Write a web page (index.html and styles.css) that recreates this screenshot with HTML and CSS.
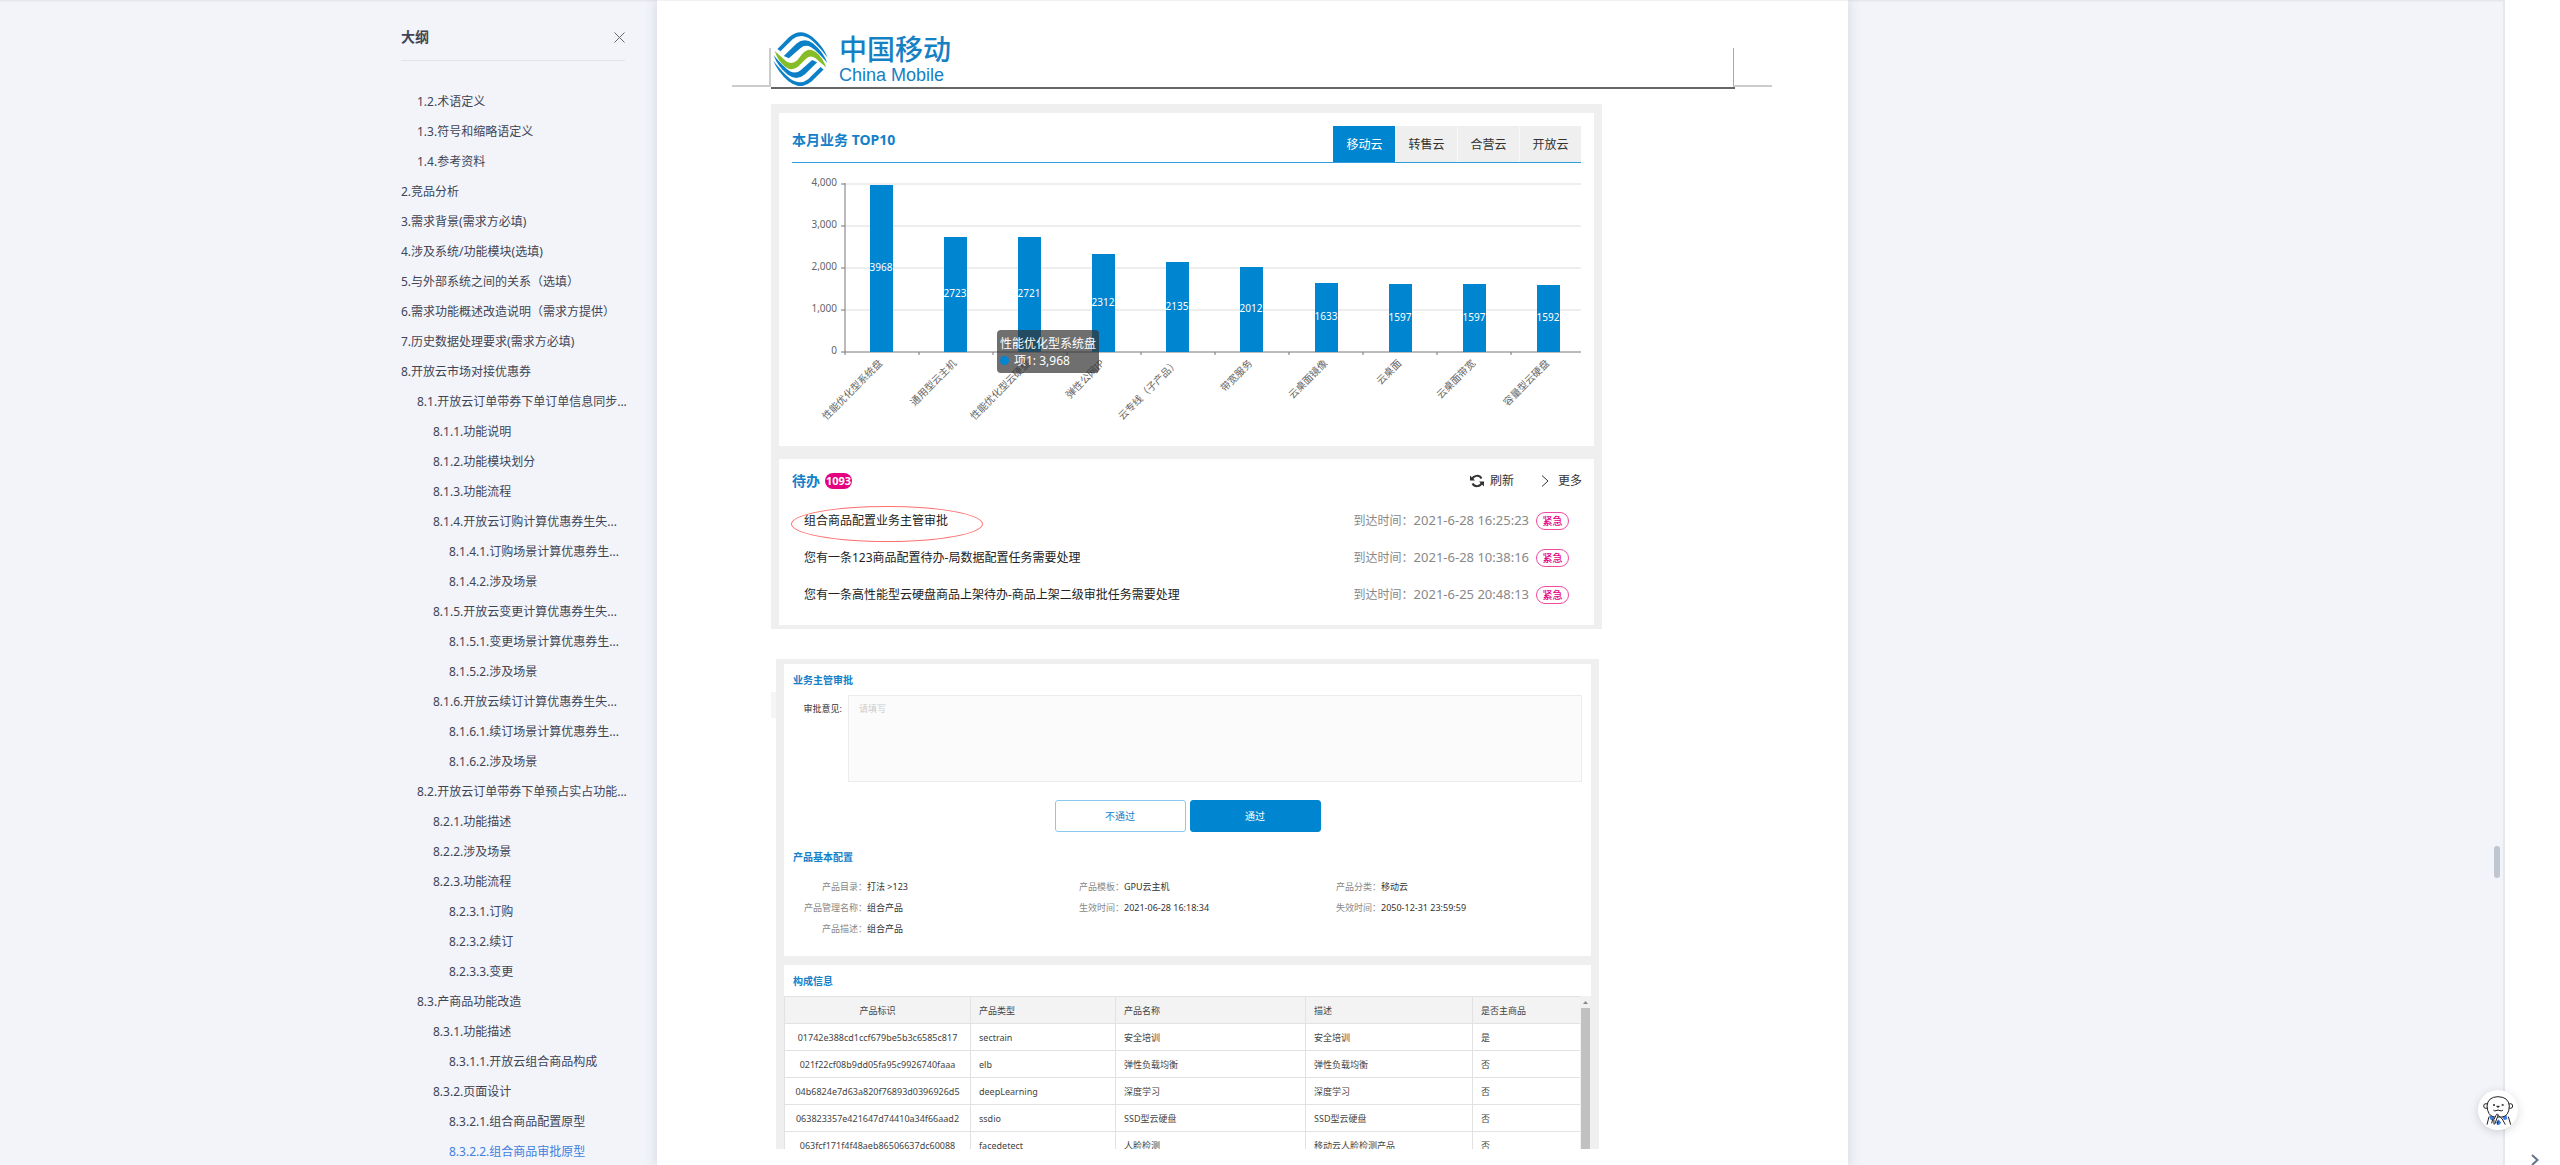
FILE: index.html
```html
<!DOCTYPE html>
<html lang="zh-CN">
<head>
<meta charset="utf-8">
<title>组合商品审批原型</title>
<link rel="stylesheet" href="styles.css">
</head>
<body>
<main class="viewer">
  <nav class="outline" aria-label="大纲">
    <header class="outline-head">
      <h2>大纲</h2>
      <button class="close" type="button" aria-label="关闭"><svg width="11" height="11" viewBox="0 0 11 11"><path d="M.5 .5l10 10M10.500 .5l-10 10"/></svg></button>
    </header>
    <ul class="outline-list">
      <li class="l2"><a href="#">1.2.术语定义</a></li>
      <li class="l2"><a href="#">1.3.符号和缩略语定义</a></li>
      <li class="l2"><a href="#">1.4.参考资料</a></li>
      <li><a href="#">2.竞品分析</a></li>
      <li><a href="#">3.需求背景(需求方必填)</a></li>
      <li><a href="#">4.涉及系统/功能模块(选填)</a></li>
      <li><a href="#">5.与外部系统之间的关系（选填）</a></li>
      <li><a href="#">6.需求功能概述改造说明（需求方提供）</a></li>
      <li><a href="#">7.历史数据处理要求(需求方必填)</a></li>
      <li><a href="#">8.开放云市场对接优惠券</a></li>
      <li class="l2"><a href="#">8.1.开放云订单带券下单订单信息同步...</a></li>
      <li class="l3"><a href="#">8.1.1.功能说明</a></li>
      <li class="l3"><a href="#">8.1.2.功能模块划分</a></li>
      <li class="l3"><a href="#">8.1.3.功能流程</a></li>
      <li class="l3"><a href="#">8.1.4.开放云订购计算优惠券生失...</a></li>
      <li class="l4"><a href="#">8.1.4.1.订购场景计算优惠券生...</a></li>
      <li class="l4"><a href="#">8.1.4.2.涉及场景</a></li>
      <li class="l3"><a href="#">8.1.5.开放云变更计算优惠券生失...</a></li>
      <li class="l4"><a href="#">8.1.5.1.变更场景计算优惠券生...</a></li>
      <li class="l4"><a href="#">8.1.5.2.涉及场景</a></li>
      <li class="l3"><a href="#">8.1.6.开放云续订计算优惠券生失...</a></li>
      <li class="l4"><a href="#">8.1.6.1.续订场景计算优惠券生...</a></li>
      <li class="l4"><a href="#">8.1.6.2.涉及场景</a></li>
      <li class="l2"><a href="#">8.2.开放云订单带券下单预占实占功能...</a></li>
      <li class="l3"><a href="#">8.2.1.功能描述</a></li>
      <li class="l3"><a href="#">8.2.2.涉及场景</a></li>
      <li class="l3"><a href="#">8.2.3.功能流程</a></li>
      <li class="l4"><a href="#">8.2.3.1.订购</a></li>
      <li class="l4"><a href="#">8.2.3.2.续订</a></li>
      <li class="l4"><a href="#">8.2.3.3.变更</a></li>
      <li class="l2"><a href="#">8.3.产商品功能改造</a></li>
      <li class="l3"><a href="#">8.3.1.功能描述</a></li>
      <li class="l4"><a href="#">8.3.1.1.开放云组合商品构成</a></li>
      <li class="l3"><a href="#">8.3.2.页面设计</a></li>
      <li class="l4"><a href="#">8.3.2.1.组合商品配置原型</a></li>
      <li class="l4"><a href="#" class="current">8.3.2.2.组合商品审批原型</a></li>
    </ul>
  </nav>

  <article class="paper">
    <header class="page-head">
      <span class="corner corner-left"></span>
      <div class="brand">
        <svg class="brand-mark" width="55" height="54" viewBox="157 96 163 160" aria-hidden="true">
          <g fill="#0c80c6">
            <path d="M170 146L205 111Q238 82 274 111Q306 139 319 172Q292 137 270 119Q240 98 216 117L179 153Z"/>
            <path d="M189 167L226 131Q250 111 276 130Q307 156 318 188Q288 152 270 141Q252 131 238 144L204 174Z"/>
          </g>
          <g fill="#0c80c6" transform="rotate(180 238.500 176.500)">
            <path d="M170 146L205 111Q238 82 274 111Q306 139 319 172Q292 137 270 119Q240 98 216 117L179 153Z"/>
            <path d="M189 167L226 131Q250 111 276 130Q307 156 318 188Q288 152 270 141Q252 131 238 144L204 174Z"/>
          </g>
          <path fill="#86bc25" d="M162 152L196 183Q213 194 229 180L243 162Q262 138 285 156Q304 172 315 201L283 174Q268 163 255 175L230 200Q211 213 192 198Q171 180 162 152Z"/>
        </svg>
        <p class="brand-name"><span class="brand-cn">中国移动</span><span class="brand-en">China Mobile</span></p>
      </div>
      <span class="corner corner-right"></span>
    </header>

    <section class="shot shot-home">
      <div class="panel panel-chart">
        <header class="chart-head">
          <h3>本月业务 TOP10</h3>
          <div class="tabs">
            <button type="button" class="on">移动云</button>
            <button type="button">转售云</button>
            <button type="button">合营云</button>
            <button type="button">开放云</button>
          </div>
        </header>
        <figure class="chart">
          <svg viewBox="0 0 789 283">
            <g class="grid"><path d="M53 21H789M53 63H789M53 105H789M53 147H789"/></g>
            <g class="axis"><path d="M53 20V192M49 21H53M49 63H53M49 105H53M49 147H53M49 189H789M127 189V192M201 189V192M275 189V192M349 189V192M423 189V192M497 189V192M571 189V192M645 189V192M719 189V192"/></g>
            <g class="tick">
              <text x="45" y="23">4,000</text><text x="45" y="65">3,000</text><text x="45" y="107">2,000</text><text x="45" y="149">1,000</text><text x="45" y="191">0</text>
            </g>
            <g class="bar">
              <rect x="78" y="22" width="23" height="167"/><rect x="152" y="74" width="23" height="115"/><rect x="226" y="74" width="23" height="115"/><rect x="300" y="91" width="23" height="98"/><rect x="374" y="99" width="23" height="90"/><rect x="448" y="104" width="23" height="85"/><rect x="523" y="120" width="23" height="69"/><rect x="597" y="121" width="23" height="68"/><rect x="671" y="121" width="23" height="68"/><rect x="745" y="122" width="23" height="67"/>
            </g>
            <g class="value">
              <text x="89" y="108">3968</text><text x="163" y="134">2723</text><text x="237" y="134">2721</text><text x="311" y="143">2312</text><text x="385" y="147">2135</text><text x="459" y="149">2012</text><text x="534" y="157">1633</text><text x="608" y="158">1597</text><text x="682" y="158">1597</text><text x="756" y="158">1592</text>
            </g>
            <g class="name">
              <text transform="translate(91 201) rotate(-45)">性能优化型系统盘</text>
              <text transform="translate(165 201) rotate(-45)">通用型云主机</text>
              <text transform="translate(239 201) rotate(-45)">性能优化型云硬盘</text>
              <text transform="translate(313 201) rotate(-45)">弹性公网IP</text>
              <text transform="translate(387 201) rotate(-45)">云专线（子产品）</text>
              <text transform="translate(461 201) rotate(-45)">带宽服务</text>
              <text transform="translate(536 201) rotate(-45)">云桌面镜像</text>
              <text transform="translate(610 201) rotate(-45)">云桌面</text>
              <text transform="translate(684 201) rotate(-45)">云桌面带宽</text>
              <text transform="translate(758 201) rotate(-45)">容量型云硬盘</text>
            </g>
          </svg>
          <figcaption class="tooltip">性能优化型系统盘<br><i class="dot"></i>项1: 3,968</figcaption>
        </figure>
      </div>

      <div class="panel panel-todo">
        <header class="todo-head">
          <h3>待办</h3><span class="count">1093</span>
          <button type="button" class="refresh"><svg width="14" height="14" viewBox="0 0 14 14"><path d="M2 5.500A5.200 5.200 0 0 1 11.500 4.500M12 8.500A5.200 5.200 0 0 1 2.500 9.500"/><path class="fill" d="M0 1.500V6.500H5ZM14 12.500V7.500H9Z"/></svg>刷新</button>
          <a href="#" class="more"><svg width="8" height="12" viewBox="0 0 8 12"><path d="M1 .5L7 6L1 11.500"/></svg>更多</a>
        </header>
        <ul class="todo-list">
          <li class="circled"><a href="#">组合商品配置业务主管审批</a><span>到达时间：<time>2021-6-28 16:25:23</time></span><em>紧急</em></li>
          <li><a href="#">您有一条123商品配置待办-局数据配置任务需要处理</a><span>到达时间：<time>2021-6-28 10:38:16</time></span><em>紧急</em></li>
          <li><a href="#">您有一条高性能型云硬盘商品上架待办-商品上架二级审批任务需要处理</a><span>到达时间：<time>2021-6-25 20:48:13</time></span><em>紧急</em></li>
        </ul>
      </div>
    </section>

    <section class="shot shot-approve">
      <div class="panel panel-form">
        <h4>业务主管审批</h4>
        <div class="opinion">
          <label for="opinion">审批意见:</label>
          <textarea id="opinion" placeholder="请填写"></textarea>
        </div>
        <div class="actions">
          <button type="button">不通过</button>
          <button type="button" class="primary">通过</button>
        </div>
        <h4>产品基本配置</h4>
        <dl class="facts">
          <div><dt>产品目录：</dt><dd>打法 &gt;123</dd></div>
          <div><dt>产品模板：</dt><dd>GPU云主机</dd></div>
          <div><dt>产品分类：</dt><dd>移动云</dd></div>
          <div><dt>产品管理名称：</dt><dd>组合产品</dd></div>
          <div><dt>生效时间：</dt><dd>2021-06-28 16:18:34</dd></div>
          <div><dt>失效时间：</dt><dd>2050-12-31 23:59:59</dd></div>
          <div><dt>产品描述：</dt><dd>组合产品</dd></div>
        </dl>
      </div>
      <div class="panel panel-parts">
        <h4>构成信息</h4>
        <div class="table-wrap">
          <table>
            <colgroup><col class="c-id"><col class="c-type"><col class="c-name"><col class="c-desc"><col></colgroup>
            <thead><tr><th>产品标识</th><th>产品类型</th><th>产品名称</th><th>描述</th><th>是否主商品</th></tr></thead>
            <tbody>
              <tr><td>01742e388cd1ccf679be5b3c6585c817</td><td>sectrain</td><td>安全培训</td><td>安全培训</td><td>是</td></tr>
              <tr><td>021f22cf08b9dd05fa95c9926740faaa</td><td>elb</td><td>弹性负载均衡</td><td>弹性负载均衡</td><td>否</td></tr>
              <tr><td>04b6824e7d63a820f76893d0396926d5</td><td>deepLearning</td><td>深度学习</td><td>深度学习</td><td>否</td></tr>
              <tr><td>063823357e421647d74410a34f66aad2</td><td>ssdio</td><td>SSD型云硬盘</td><td>SSD型云硬盘</td><td>否</td></tr>
              <tr><td>063fcf171f4f48aeb86506637dc60088</td><td>facedetect</td><td>人脸检测</td><td>移动云人脸检测产品</td><td>否</td></tr>
            </tbody>
          </table>
          <div class="scrollbar"><svg width="5" height="3" viewBox="0 0 5 3"><path d="M0 3L2.500 0L5 3Z"/></svg><span></span></div>
        </div>
      </div>
    </section>
  </article>
  <span class="page-thumb"></span>
</main>

<aside class="rail">
  <button type="button" class="mascot" aria-label="助手">
    <svg width="40" height="40" viewBox="0 0 120 120" stroke="#222" stroke-width="3">
      <path fill="#3b7de8" stroke="none" d="M34 76L50 80L46 92L36 88ZM72 80L86 76L88 88L78 90ZM54 98L61 88L70 98L62 106Z"/>
      <path d="M33 80L27 104M91 80L98 104M44 88L41 100M60 92L58 104"/>
      <circle cx="24" cy="48" r="7" fill="#fff"/><circle cx="97" cy="48" r="7" fill="#fff"/>
      <path fill="#fff" d="M27 48Q29 21 60 20Q92 21 94 48Q93 79 72 81L48 81Q29 77 27 48Z"/>
      <path d="M46 60Q48 64 54 62Q60 58 66 62Q72 64 75 60"/>
      <path fill="#222" d="M56 49H64L60 52Z"/><path d="M45 45H51M71 45H77" stroke-width="5"/>
      <path fill="#fff" d="M48 103Q44 88 54 76Q59 68 60 74Q60 80 56 87L50 103M82 104Q74 84 61 76"/>
    </svg>
  </button>
  <button type="button" class="expand" aria-label="展开"><svg width="8" height="12" viewBox="0 0 8 12"><path d="M1 1L6.500 6L1 11"/></svg></button>
</aside>
</body>
</html>
```
FILE: styles.css
```css
* { box-sizing: border-box; }
body {
  margin: 0;
  min-height: 100vh;
  display: flex;
  background: #fff;
  color: #333;
  font: 12px/1.5 "Noto Sans", "Noto Sans CJK SC", sans-serif;
}
h2, h3, h4, p, ul, dl, dd, figure { margin: 0; padding: 0; }
ul { list-style: none; }
a { color: inherit; text-decoration: none; }
em, i { font-style: normal; }
button { margin: 0; padding: 0; border: 0; background: none; color: inherit; font: inherit; cursor: pointer; }
svg { display: block; fill: none; }

/* viewer */
.viewer {
  position: relative;
  flex: 1;
  display: grid;
  grid-template-columns: 1fr 1191px 1fr;
  padding-left: 2px;
  margin-bottom: 1px;
  background: #f2f4f9;
  border-right: 2px solid #e5e8ec;
  border-bottom: 1px solid #e2e4ee;
  box-shadow: inset 0 2px 2px -1px rgba(0, 0, 0, .08);
}
.page-thumb {
  position: absolute;
  top: 846px;
  right: 3px;
  width: 6px;
  height: 32px;
  border-radius: 3px;
  background: #c0c6d0;
}

/* outline */
.outline {
  justify-self: end;
  width: 224px;
  margin-right: 32px;
  padding-top: 26px;
  color: #3f4556;
}
.outline-head {
  display: flex;
  justify-content: space-between;
  align-items: center;
  padding-bottom: 12px;
  margin-bottom: 26px;
  border-bottom: 1px solid #e1e3e8;
}
.outline-head h2 { font-size: 14px; line-height: 22px; }
.close svg { stroke: #666; }
.outline-list li { height: 30px; line-height: 30px; white-space: nowrap; }
.outline-list .l2 { padding-left: 16px; }
.outline-list .l3 { padding-left: 32px; }
.outline-list .l4 { padding-left: 48px; }
.outline-list .current { color: #3f7fe0; }

/* page */
.paper {
  background: #fff;
  padding-bottom: 15px;
  box-shadow: 0 0 12px rgba(60, 80, 100, .18);
  border-top: 1px solid #f2f2f3;
}
.page-head { display: flex; padding-left: 75px; margin-bottom: 15px; }
.corner { width: 39px; height: 39px; margin-top: 47px; border-bottom: 2px solid #ccc; }
.corner-left { border-right: 2px solid #ccc; }
.corner-right { margin-left: -2px; border-left: 1px solid #aaa; }
.brand {
  display: flex;
  gap: 11px;
  width: 964px;
  height: 88px;
  padding: 31px 0 0 2px;
  border-bottom: 2px solid #666;
}
.brand-name { display: flex; flex-direction: column; color: #1680c5; }
.brand-cn { font-size: 28px; line-height: 34px; font-weight: 500; }
.brand-en { font: 18px/18px "Liberation Sans", Arial, sans-serif; }

.shot { background: #efefef; display: flex; flex-direction: column; }
.panel { background: #fff; }
.shot-home { width: 831px; margin-left: 114px; padding: 9px 8px 4px; gap: 13px; }

/* chart */
.panel-chart { padding: 13px 13px 0; }
.panel-chart h3, .panel-todo h3 { font-size: 14px; line-height: 20px; color: #1580c8; }
.chart-head { display: flex; justify-content: space-between; border-bottom: 1px solid #2f9ddd; }
.chart-head h3 { padding-top: 4px; }
.tabs { display: flex; }
.tabs button { width: 62px; height: 36px; padding-top: 2px; border-left: 1px solid #f8f8f8; background: #efefef; color: #333; }
.tabs .on { border-color: #0085d0; background: #0085d0; color: #fff; }
.chart { position: relative; }
.chart svg { width: 100%; }
.grid path { stroke: #ddd; }
.axis path { stroke: #777; }
.tick text { fill: #666; font-size: 10px; text-anchor: end; }
.bar rect { fill: #0085d0; }
.value text { fill: #fff; font-size: 10px; text-anchor: middle; }
.name text { fill: #666; font-size: 10px; text-anchor: end; }
.tooltip {
  position: absolute;
  left: 205px;
  top: 167px;
  padding: 5px 3px 4px;
  border-radius: 4px;
  background: rgba(50, 50, 50, .7);
  color: #fff;
  font-size: 12px;
  line-height: 17px;
  white-space: nowrap;
}
.dot { display: inline-block; width: 9px; height: 9px; margin-right: 5px; border-radius: 50%; background: #0085d0; }

/* to-do */
.panel-todo { padding: 0 12px 12px 13px; }
.todo-head { display: flex; align-items: center; height: 43px; }
.count {
  margin: 0 auto 0 5px;
  width: 27px;
  border-radius: 8px;
  background: #e4007f;
  color: #fff;
  font-size: 11px;
  font-weight: 700;
  line-height: 16px;
  text-align: center;
}
.refresh, .more { display: flex; align-items: center; gap: 6px; color: #333; }
.refresh svg { stroke: #333; stroke-width: 2; }
.refresh .fill { fill: #333; stroke: none; }
.more { margin-left: 27px; gap: 9px; }
.more svg { stroke: #333; }
.todo-list li { position: relative; display: flex; align-items: center; height: 37px; padding: 0 13px 0 12px; }
.todo-list a { margin-right: auto; color: #222; }
.todo-list span { color: #888; }
.todo-list time { font-size: 13px; }
.todo-list em {
  width: 33px;
  margin-left: 7px;
  border: 1px solid #f04aa3;
  border-radius: 9px;
  color: #e6007f;
  font-size: 10px;
  font-weight: 500;
  line-height: 16px;
  text-align: center;
}
.circled::after {
  content: "";
  position: absolute;
  left: -1px;
  top: 4px;
  width: 190px;
  height: 34px;
  border: 1px solid #ff7070;
  border-radius: 50%;
}

/* approval */
.shot-approve {
  position: relative;
  width: 823px;
  margin: 30px 0 0 119px;
  padding: 5px 8px 0;
  gap: 9px;
  font-size: 9px;
}
.shot-approve::before {
  content: "";
  position: absolute;
  left: -5px;
  top: 33px;
  width: 5px;
  height: 26px;
  background: #f5f5f5;
}
.shot-approve h4 { padding-top: 2px; font-size: 10px; line-height: 29px; color: #1580c8; }
.panel-form { padding: 0 9px 17px; }
.opinion { display: flex; }
.opinion label { width: 55px; padding-right: 6px; line-height: 28px; text-align: right; }
.opinion textarea {
  flex: 1;
  height: 87px;
  padding: 6px 10px;
  border: 1px solid #ececec;
  background: #fbfbfb;
  font: inherit;
  resize: none;
}
.opinion textarea::placeholder { color: #ccc; }
.actions { display: flex; justify-content: center; gap: 4px; margin: 18px 0 9px; }
.actions button { width: 131px; height: 32px; border: 1px solid #8cc8ee; border-radius: 3px; color: #1580c8; font-size: 10px; }
.actions .primary { border-color: #0085d0; background: #0085d0; color: #fff; }
.facts { display: grid; grid-template-columns: repeat(3, 1fr); padding: 4px 18px 0 0; line-height: 21px; }
.facts div { display: flex; }
.facts dt { width: 74px; text-align: right; color: #888; }
.panel-parts { height: 184px; overflow: hidden; }
.panel-parts h4 { padding-left: 9px; }
.table-wrap { display: flex; }
table { flex: 1; border-collapse: collapse; table-layout: fixed; width: 796px; }
.c-id { width: 186px; }
.c-type { width: 145px; }
.c-name { width: 190px; }
.c-desc { width: 167px; }
th, td { height: 27px; padding: 1px 8px 0; border: 1px solid #e2e2e2; border-right-width: 0; text-align: left; line-height: 14px; font-weight: 400; color: #444; white-space: nowrap; }
th { background: #f3f3f3; }
th:first-child, td:first-child { text-align: center; padding: 1px 0 0; }
.scrollbar { width: 11px; background: #f1f1f1; display: flex; flex-direction: column; align-items: center; padding-top: 5px; gap: 4px; }
.scrollbar path { fill: #888; }
.scrollbar span { flex: 1; width: 9px; background: #c1c1c1; }

/* right rail */
.rail {
  width: 55px;
  display: flex;
  flex-direction: column;
  justify-content: flex-end;
}
.mascot {
  position: relative;
  left: -27px;
  width: 40px;
  height: 40px;
  margin-bottom: 24px;
  border-radius: 50%;
  background: #fff;
  box-shadow: 0 2px 10px rgba(0, 0, 0, .15);
}
.expand { padding: 0 0 3px 26px; }
.expand svg { stroke: #66718c; stroke-width: 2; }
```
